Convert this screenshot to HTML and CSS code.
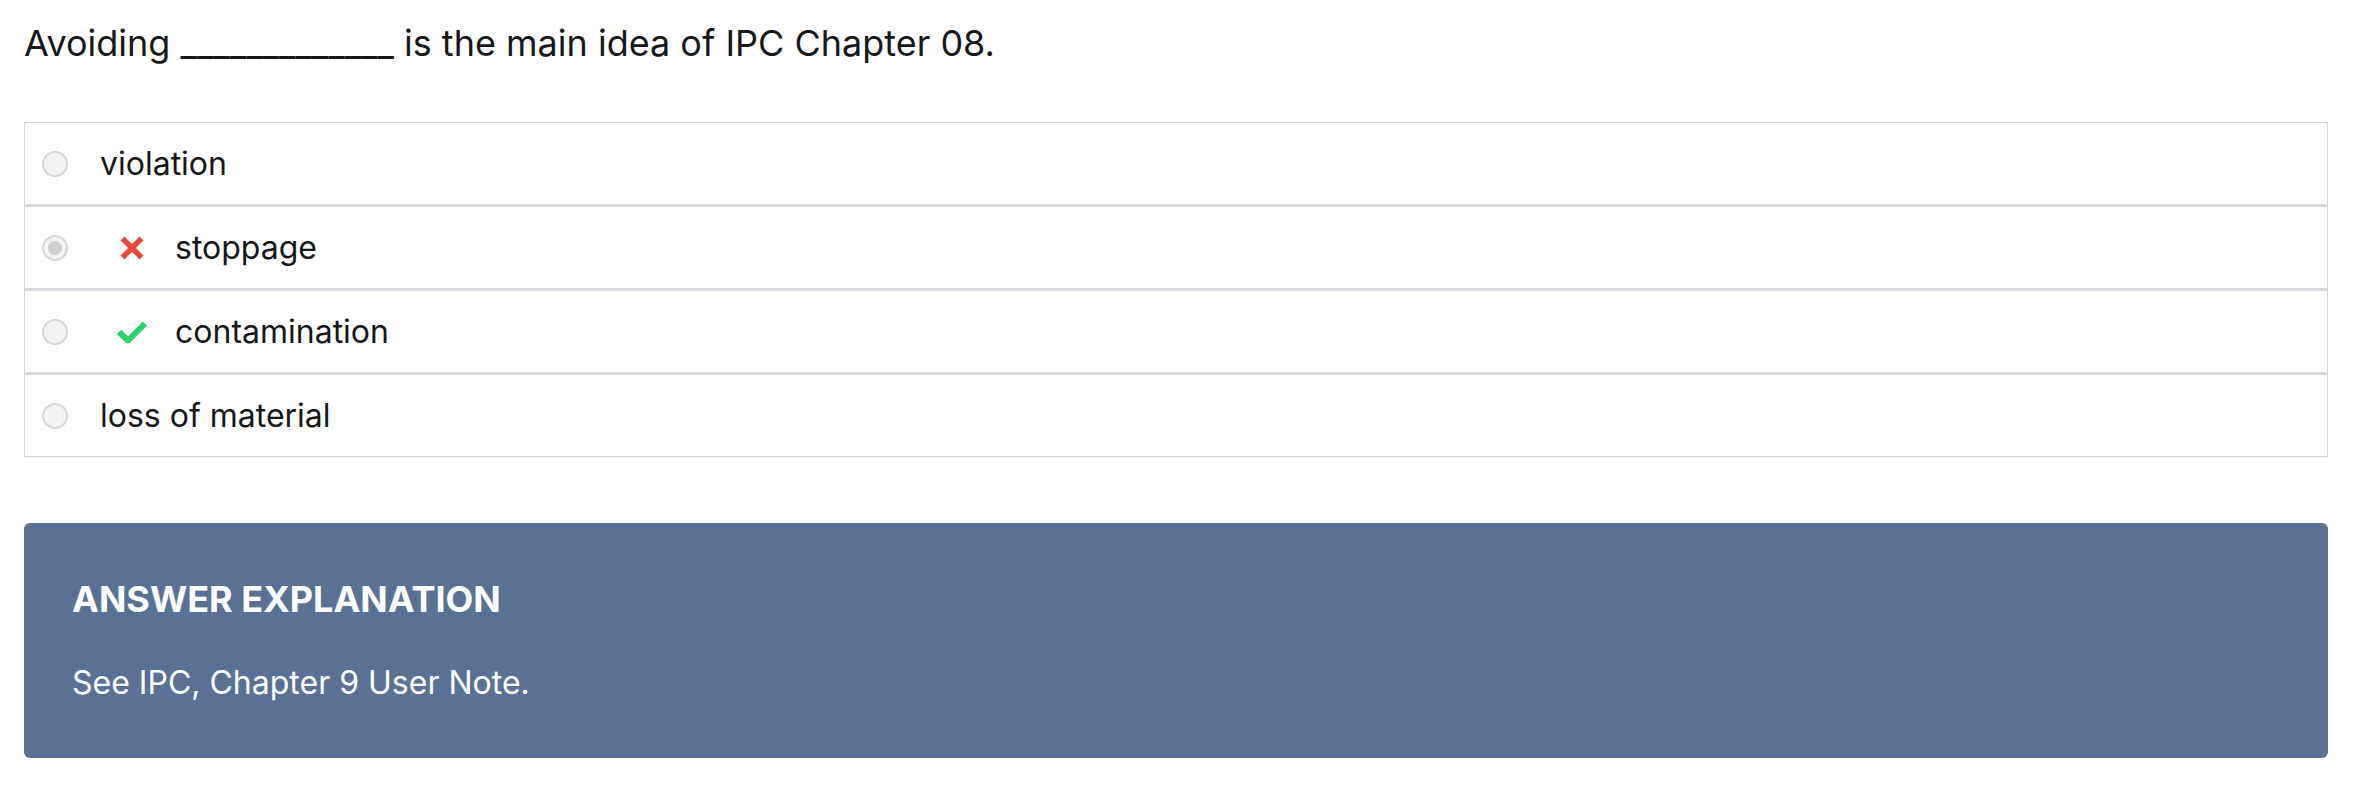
FILE: index.html
```html
<!DOCTYPE html>
<html lang="en">
<head>
<meta charset="utf-8">
<title>Question</title>
<link rel="stylesheet" href="styles.css">
</head>
<body>
<main class="page">
  <p class="question">Avoiding _____________ is the main idea of IPC Chapter 08.</p>
  <ul class="options">
    <li class="option">
      <span class="radio"></span>
      <span class="label">violation</span>
    </li>
    <li class="option">
      <span class="radio radio-checked"></span>
      <span class="mark">
        <svg viewBox="0 0 24 24" width="24" height="24"><path d="M2.5 2.5 L21.5 21.5 M21.5 2.5 L2.5 21.5" stroke="#e8473d" stroke-width="5.5" stroke-linecap="butt" fill="none"/></svg>
      </span>
      <span class="label">stoppage</span>
    </li>
    <li class="option">
      <span class="radio"></span>
      <span class="mark">
        <svg viewBox="0 0 30 22" width="30" height="22"><path d="M2 11 L11 19.5 L28 2.5" stroke="#2bd26b" stroke-width="6" stroke-linecap="butt" stroke-linejoin="miter" fill="none"/></svg>
      </span>
      <span class="label">contamination</span>
    </li>
    <li class="option">
      <span class="radio"></span>
      <span class="label">loss of material</span>
    </li>
  </ul>
  <section class="explanation">
    <h2 class="explanation-title">ANSWER EXPLANATION</h2>
    <p class="explanation-text">See IPC, Chapter 9 User Note.</p>
  </section>
</main>
</body>
</html>
```
FILE: styles.css
```css
html, body {
  margin: 0;
  padding: 0;
  background: #ffffff;
}
body {
  font-family: Inter, "Noto Sans", "Liberation Sans", sans-serif;
  color: #15171a;
}
.page {
  padding: 19px 38px 0 24px;
}
.question {
  margin: 0;
  font-size: 36px;
  line-height: 48px;
}
.options {
  list-style: none;
  margin: 55px 0 0 0;
  padding: 0;
  border: 1px solid #d4d4d4;
}
.option {
  display: flex;
  align-items: center;
  height: 81px;
  padding-left: 17px;
  border-top: 3px solid #d5d8dc;
}
.option:first-child {
  border-top: none;
}
.radio {
  flex: none;
  box-sizing: border-box;
  width: 26px;
  height: 26px;
  border-radius: 50%;
  border: 2px solid #d6d6d6;
  background: #f3f3f3;
  margin-right: 32px;
  display: flex;
  align-items: center;
  justify-content: center;
}
.radio-checked::after {
  content: "";
  width: 14px;
  height: 14px;
  border-radius: 50%;
  background: #cfcfcf;
}
.mark {
  flex: none;
  width: 30px;
  margin-left: 17px;
  margin-right: 28px;
  display: flex;
  justify-content: center;
  align-items: center;
}
.label {
  font-size: 32px;
  line-height: 40px;
}
.explanation {
  margin-top: 66px;
  background: #5a7196;
  border-radius: 6px;
  padding: 57px 48px 56px 48px;
  color: #ffffff;
}
.explanation-title {
  margin: 0;
  font-size: 36px;
  font-weight: 700;
  line-height: 38px;
}
.explanation-text {
  margin: 46px 0 0 0;
  font-size: 32px;
  line-height: 38px;
}
```
